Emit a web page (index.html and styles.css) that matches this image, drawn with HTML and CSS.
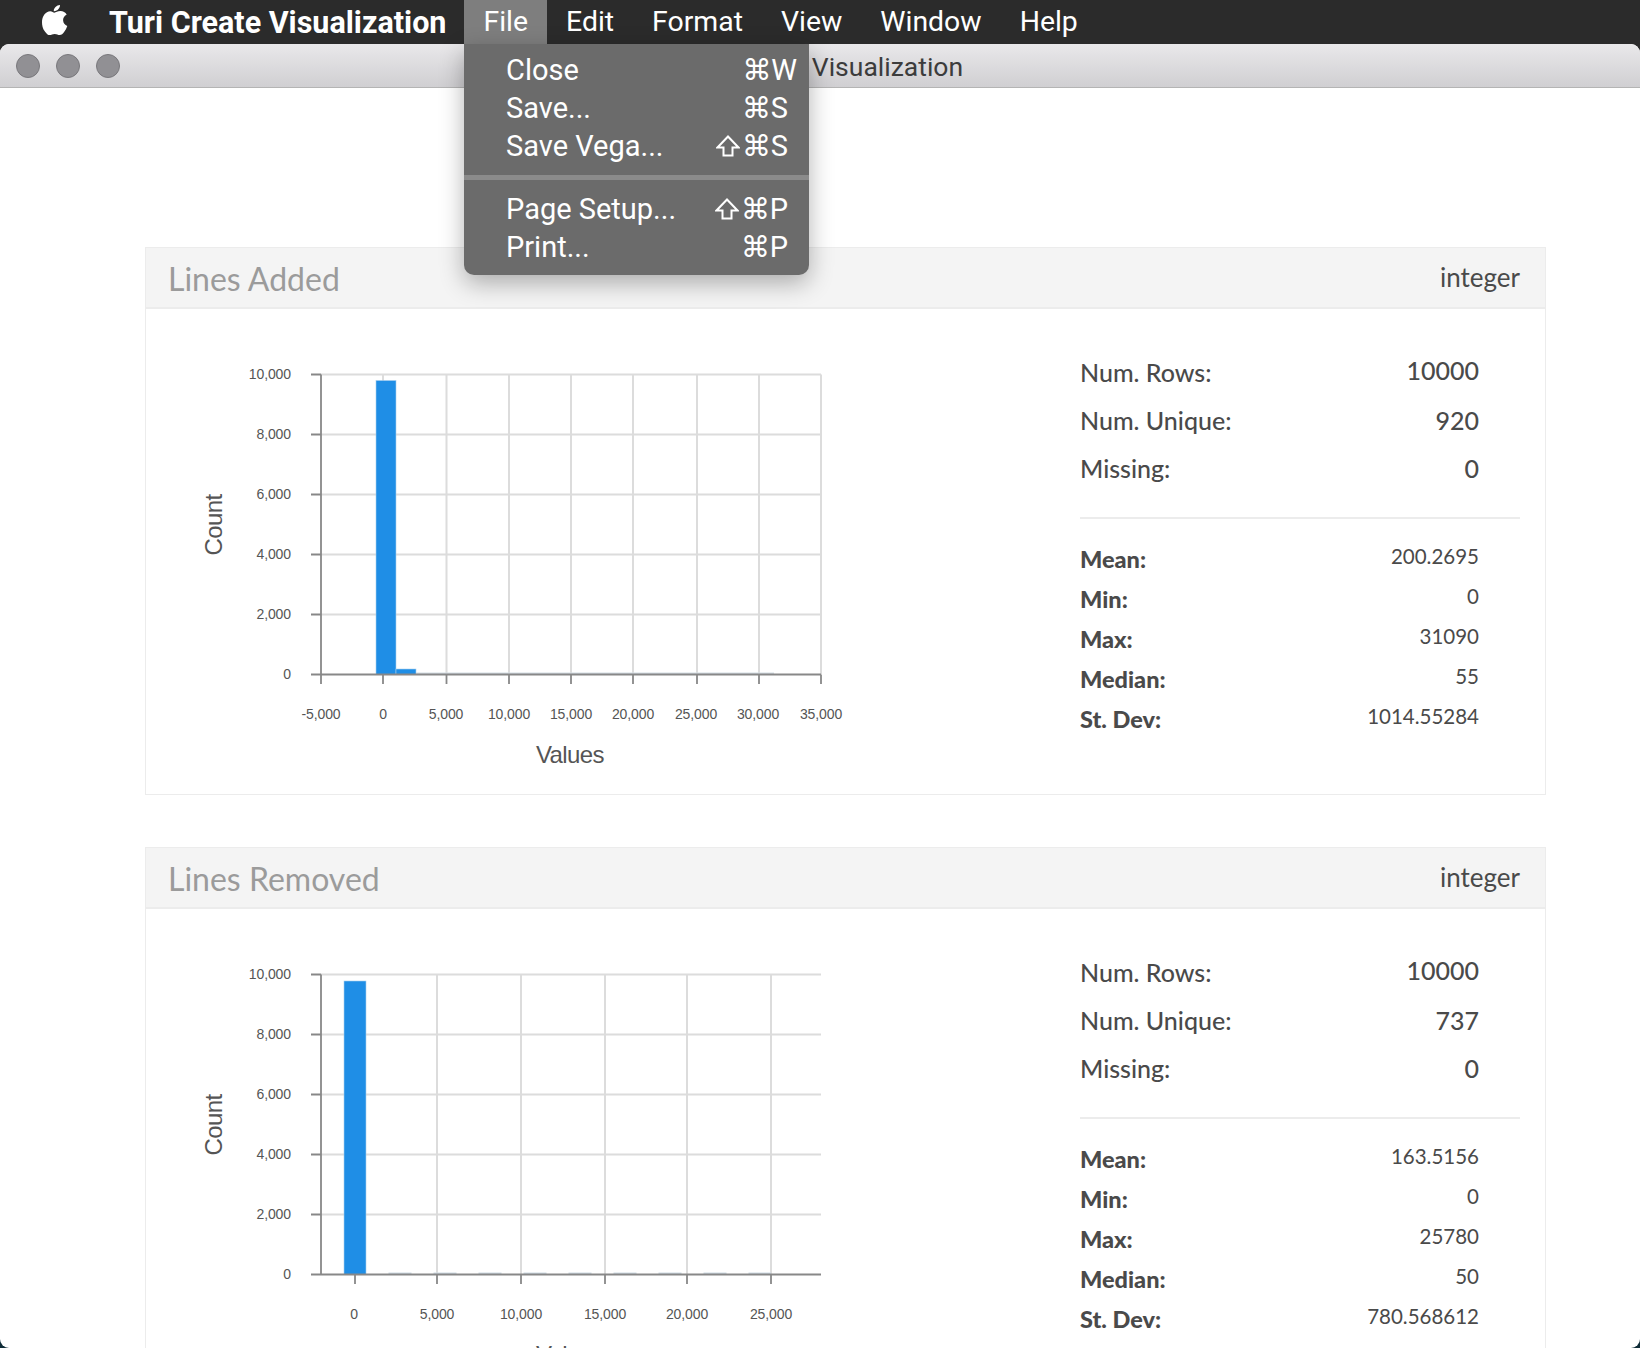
FILE: index.html
```html
<!DOCTYPE html>
<html lang="en">
<head>
    <meta charset="UTF-8">
    <title>Turi Create Visualization</title>
    <link rel="stylesheet" href="styles.css">
</head>
<body>
    <div class="menubar">
        <svg class="apple" viewBox="0 0 26 32" width="26" height="32">
            <path d="M18 1c.2 2.600-2.300 6.300-6.200 6.200C11.500 4 14.700 1.200 18 1zM12.400 8.700c1.300 0 3.300-1.600 6-1.600 2.800 0 5 1.300 6.300 3.300-2.700 1.500-3.700 3.600-3.600 5.900.1 2.700 1.700 4.700 4.200 5.700-.8 2.300-1.800 4.300-3.200 6.100-1.300 1.700-2.600 3-4.400 3-1.900 0-2.700-1.200-5-1.200s-3.200 1.200-5 1.200c-1.800 0-3.200-1.500-4.600-3.400C.6 25 0 21.300 0 18.300 0 12.300 3.600 7.200 8.300 7.200c1.800 0 3 1.500 4.100 1.500z" fill="#fff"/>
        </svg>
        <span class="app-name">Turi Create Visualization</span>
        <span class="menu-item active">File</span>
        <span class="menu-item">Edit</span>
        <span class="menu-item">Format</span>
        <span class="menu-item">View</span>
        <span class="menu-item">Window</span>
        <span class="menu-item">Help</span>
    </div>

    <div class="window">
        <div class="titlebar">
            <div class="lights"><i></i><i></i><i></i></div>
            <div class="window-title">Turi Create Visualization</div>
        </div>

        <div class="content">
            <section class="card">
                <header class="card-head">
                    <h2>Lines Added</h2>
                    <span class="type">integer</span>
                </header>
                <div class="card-body">
                    <svg class="chart" width="700" height="460" viewBox="146 309 700 460">
                        <g class="grid">
                            <path d="M321 374.500H821M321 434.500H821M321 494.500H821M321 554.500H821M321 614.500H821"/>
                            <path d="M383 374.500V674M446.500 374.500V674M509 374.500V674M571 374.500V674M633 374.500V674M697 374.500V674M759 374.500V674M821 374.500V674"/>
                        </g>
                        <g class="bars">
                            <rect x="376" y="380.500" width="20" height="294"/>
                            <rect x="396" y="669" width="20" height="5.500"/>
                            <rect class="faint" x="416" y="672.500" width="358" height="2"/>
                        </g>
                        <g class="axis">
                            <path d="M321 374.500V674.500M311 374.500H321M311 434.500H321M311 494.500H321M311 554.500H321M311 614.500H321M311 674.500H821"/>
                            <path d="M321 674.500V684M383 674.500V684M446.500 674.500V684M509 674.500V684M571 674.500V684M633 674.500V684M697 674.500V684M759 674.500V684M821 674.500V684"/>
                        </g>
                        <g class="y-labels">
                            <text x="291" y="379">10,000</text>
                            <text x="291" y="439">8,000</text>
                            <text x="291" y="499">6,000</text>
                            <text x="291" y="559">4,000</text>
                            <text x="291" y="619">2,000</text>
                            <text x="291" y="679">0</text>
                        </g>
                        <g class="x-labels">
                            <text x="321" y="719">-5,000</text>
                            <text x="383" y="719">0</text>
                            <text x="446" y="719">5,000</text>
                            <text x="509" y="719">10,000</text>
                            <text x="571" y="719">15,000</text>
                            <text x="633" y="719">20,000</text>
                            <text x="696" y="719">25,000</text>
                            <text x="758" y="719">30,000</text>
                            <text x="821" y="719">35,000</text>
                        </g>
                        <text class="axis-title" x="570" y="763">Values</text>
                        <text class="axis-title" transform="translate(222 525) rotate(-90)">Count</text>
                    </svg>
                    <div class="stats">
                        <div class="stat-row big"><span>Num. Rows:</span><b>10000</b></div>
                        <div class="stat-row big"><span>Num. Unique:</span><b>920</b></div>
                        <div class="stat-row big"><span>Missing:</span><b>0</b></div>
                        <hr>
                        <div class="stat-row"><span>Mean:</span><b>200.2695</b></div>
                        <div class="stat-row"><span>Min:</span><b>0</b></div>
                        <div class="stat-row"><span>Max:</span><b>31090</b></div>
                        <div class="stat-row"><span>Median:</span><b>55</b></div>
                        <div class="stat-row"><span>St. Dev:</span><b>1014.55284</b></div>
                    </div>
                </div>
            </section>

            <section class="card">
                <header class="card-head">
                    <h2>Lines Removed</h2>
                    <span class="type">integer</span>
                </header>
                <div class="card-body">
                    <svg class="chart" width="700" height="460" viewBox="146 909 700 460">
                        <g class="grid">
                            <path d="M321 974.500H821M321 1034.500H821M321 1094.500H821M321 1154.500H821M321 1214.500H821"/>
                            <path d="M437 974.500V1274M521 974.500V1274M605 974.500V1274M687 974.500V1274M771 974.500V1274"/>
                        </g>
                        <g class="bars">
                            <rect x="344" y="981" width="22" height="293.500"/>
                            <path class="trail" d="M388.500 1273.500H771"/>
                        </g>
                        <g class="axis">
                            <path d="M321 974.500V1274.500M311 974.500H321M311 1034.500H321M311 1094.500H321M311 1154.500H321M311 1214.500H321M311 1274.500H821"/>
                            <path d="M355 1274.500V1284M437 1274.500V1284M521 1274.500V1284M605 1274.500V1284M687 1274.500V1284M771 1274.500V1284"/>
                        </g>
                        <g class="y-labels">
                            <text x="291" y="979">10,000</text>
                            <text x="291" y="1039">8,000</text>
                            <text x="291" y="1099">6,000</text>
                            <text x="291" y="1159">4,000</text>
                            <text x="291" y="1219">2,000</text>
                            <text x="291" y="1279">0</text>
                        </g>
                        <g class="x-labels">
                            <text x="354" y="1319">0</text>
                            <text x="437" y="1319">5,000</text>
                            <text x="521" y="1319">10,000</text>
                            <text x="605" y="1319">15,000</text>
                            <text x="687" y="1319">20,000</text>
                            <text x="771" y="1319">25,000</text>
                        </g>
                        <text class="axis-title" x="570" y="1363">Values</text>
                        <text class="axis-title" transform="translate(222 1125) rotate(-90)">Count</text>
                    </svg>
                    <div class="stats">
                        <div class="stat-row big"><span>Num. Rows:</span><b>10000</b></div>
                        <div class="stat-row big"><span>Num. Unique:</span><b>737</b></div>
                        <div class="stat-row big"><span>Missing:</span><b>0</b></div>
                        <hr>
                        <div class="stat-row"><span>Mean:</span><b>163.5156</b></div>
                        <div class="stat-row"><span>Min:</span><b>0</b></div>
                        <div class="stat-row"><span>Max:</span><b>25780</b></div>
                        <div class="stat-row"><span>Median:</span><b>50</b></div>
                        <div class="stat-row"><span>St. Dev:</span><b>780.568612</b></div>
                    </div>
                </div>
            </section>
        </div>
    </div>

    <!-- open File menu, sits over the window -->
    <div class="dropdown">
        <div class="drop-row"><span>Close</span><kbd class="wide">⌘W</kbd></div>
        <div class="drop-row"><span>Save...</span><kbd>⌘S</kbd></div>
        <div class="drop-row">
            <span>Save Vega...</span>
            <kbd>
                <svg class="shift" viewBox="0 0 24 24" width="24" height="24"><path d="M12 2.500L22.500 13.500H16.500V21.500H7.500V13.500H1.500Z"/></svg>⌘S
            </kbd>
        </div>
        <div class="drop-sep"></div>
        <div class="drop-row">
            <span>Page Setup...</span>
            <kbd>
                <svg class="shift" viewBox="0 0 24 24" width="24" height="24"><path d="M12 2.500L22.500 13.500H16.500V21.500H7.500V13.500H1.500Z"/></svg>⌘P
            </kbd>
        </div>
        <div class="drop-row"><span>Print...</span><kbd>⌘P</kbd></div>
    </div>
</body>
</html>
```

FILE: styles.css
```css
:root {
    --bar: #2b2b2b;
    --text: #4a4a4a;
    --line: #ececec;
    --blue: #1f8ee6;
}
html, body {
    margin: 0;
    padding: 0;
    height: 1348px;
    overflow: hidden;
}
body {
    position: relative;
    background: linear-gradient(var(--bar) 50%, #0f2c38 50%);
    font-family: 'Lato', Arial, sans-serif;
    color: var(--text);
}
.menubar {
    height: 44px;
    display: flex;
    align-items: center;
    padding-left: 42px;
    color: #fff;
    font-family: 'Roboto', Arial, sans-serif;
    font-size: 28.400px;
}
.apple {
    margin-right: 41px;
    margin-top: -5px;
}
.app-name {
    font-size: 30.500px;
    font-weight: 700;
    margin-right: 18px;
}
.menu-item {
    height: 44px;
    line-height: 44px;
    padding: 0 19px;
}
.menu-item.active {
    background: #7e7e7e;
}
.window {
    height: 1304px;
    background: #fff;
    border-radius: 9px;
    overflow: hidden;
}
.titlebar {
    height: 44px;
    box-sizing: border-box;
    position: relative;
    display: flex;
    align-items: center;
    justify-content: center;
    background: linear-gradient(#e9e8ea, #d0cfd2);
    border-bottom: 1px solid #b4b4b4;
}
.lights {
    position: absolute;
    left: 16px;
    top: 10px;
    display: flex;
    gap: 16px;
}
.lights i {
    width: 22px;
    height: 22px;
    border-radius: 50%;
    background: #919094;
    border: 1px solid #79787c;
}
.window-title {
    font-family: 'Roboto', Arial, sans-serif;
    font-size: 26.500px;
    padding-top: 2px;
    color: #3c3c3c;
}
.content {
    padding: 159px 94px 0 145px;
    display: flex;
    flex-direction: column;
    gap: 52px;
}
.card {
    border: 1px solid var(--line);
    height: 546px;
    flex-shrink: 0;
}
.card-head {
    height: 59px;
    background: #f4f4f4;
    border-bottom: 2px solid var(--line);
    display: flex;
    align-items: center;
    justify-content: space-between;
    padding: 0 25px 0 22px;
}
.card-head h2 {
    margin: 2px 0 0;
    font-size: 32px;
    font-weight: 400;
    color: #9b9b9b;
}
.type {
    font-size: 26px;
    margin-top: -2px;
}
.card-body {
    display: flex;
}
.chart {
    display: block;
    flex-shrink: 0;
}
.grid path {
    fill: none;
    stroke: #dcdcdc;
    stroke-width: 2;
}
.axis path {
    fill: none;
    stroke: #888;
    stroke-width: 1.800;
}
.bars rect {
    fill: var(--blue);
    stroke: #a9cfee;
    stroke-width: .6;
}
.bars rect.faint {
    fill: #d4dde4;
    stroke: none;
}
.bars .trail {
    fill: none;
    stroke: #cfdbe4;
    stroke-width: 2;
    stroke-dasharray: 23 22;
}
.chart text {
    font-family: 'Liberation Sans', Arial, sans-serif;
    fill: #555;
}
.y-labels text {
    font-size: 14px;
    text-anchor: end;
    letter-spacing: -.1px;
}
.x-labels text {
    font-size: 14px;
    text-anchor: middle;
    letter-spacing: -.1px;
}
.chart .axis-title {
    font-size: 24px;
    text-anchor: middle;
    letter-spacing: -.6px;
}
.stats {
    margin-left: 234px;
    width: 440px;
    padding-top: 39px;
}
.stat-row {
    display: flex;
    justify-content: space-between;
    padding-right: 41px;
    height: 40px;
    align-items: center;
    font-size: 20.500px;
}
.stat-row span {
    font-size: 23.500px;
    font-weight: 900;
}
.stat-row b {
    font-weight: 400;
    margin-top: -6px;
}
.stat-row.big {
    height: 48px;
    font-size: 25px;
}
.stat-row.big span {
    font-size: 25px;
    font-weight: 500;
}
.stat-row.big b {
    font-weight: 500;
    margin-top: 0;
}
.stat-row.big:first-child b {
    margin-top: -4px;
}
.stats hr {
    margin: 25px 0 20px;
    border: 0;
    height: 2px;
    background: var(--line);
}
.dropdown {
    position: absolute;
    left: 464px;
    top: 44px;
    width: 345px;
    height: 231px;
    box-sizing: border-box;
    padding-top: 7px;
    background: #6b6b6b;
    border-radius: 0 0 10px 10px;
    box-shadow: 0 8px 24px rgba(0,0,0,.3);
    color: #fff;
    font-family: 'Roboto', Arial, sans-serif;
    font-size: 29px;
}
.drop-row {
    height: 38px;
    display: flex;
    align-items: center;
    justify-content: space-between;
    padding: 0 21px 0 42px;
}
.drop-row kbd {
    display: flex;
    align-items: center;
    font-family: 'Roboto', 'DejaVu Sans', sans-serif;
    font-size: 29px;
}
.drop-row kbd.wide {
    margin-right: -9px;
}
.shift {
    margin-right: 2px;
}
.shift path {
    fill: none;
    stroke: #fff;
    stroke-width: 2;
}
.drop-sep {
    height: 5px;
    margin: 10px 0 10px;
    background: #8b8b8b;
}
```
